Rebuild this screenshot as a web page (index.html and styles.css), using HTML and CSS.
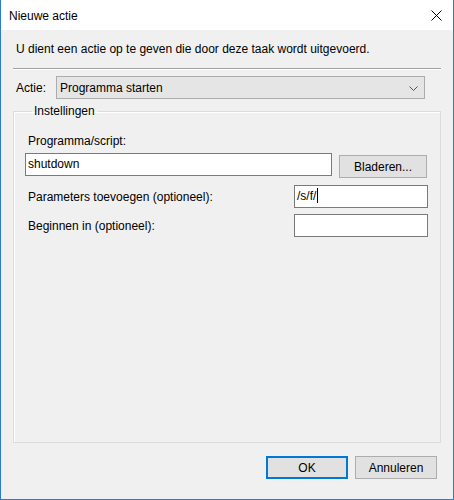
FILE: index.html
```html
<!DOCTYPE html>
<html lang="nl">
<head>
    <meta charset="UTF-8">
    <title>Nieuwe actie</title>
    <link rel="stylesheet" href="styles.css">
</head>
<body>
    <div class="window">
        <div class="titlebar">
            <span class="title">Nieuwe actie</span>
            <svg class="close" width="11" height="11" viewBox="0 0 11 11">
                <path d="M0.5 0.5 L10.5 10.5 M10.5 0.5 L0.5 10.5" stroke="#000" stroke-width="1" fill="none"/>
            </svg>
        </div>
        <div class="content">
            <p class="intro">U dient een actie op te geven die door deze taak wordt uitgevoerd.</p>
            <div class="separator"></div>
            <div class="action-row">
                <span class="action-label">Actie:</span>
                <div class="combo">
                    <span>Programma starten</span>
                    <svg class="chevron" width="9" height="5" viewBox="0 0 9 5">
                        <path d="M0.5 0.5 L4.5 4.5 L8.5 0.5" stroke="#555" stroke-width="1" fill="none"/>
                    </svg>
                </div>
            </div>
            <fieldset class="group">
                <legend>Instellingen</legend>
                <div class="label">Programma/script:</div>
                <div class="program-row">
                    <div class="field wide">shutdown</div>
                    <button class="btn browse" type="button">Bladeren...</button>
                </div>
                <div class="param-row">
                    <span class="label">Parameters toevoegen (optioneel):</span>
                    <div class="field small">/s/f/<span class="caret"></span></div>
                </div>
                <div class="param-row second">
                    <span class="label">Beginnen in (optioneel):</span>
                    <div class="field small"></div>
                </div>
            </fieldset>
            <div class="footer">
                <button class="btn default" type="button">OK</button>
                <button class="btn" type="button">Annuleren</button>
            </div>
        </div>
    </div>
</body>
</html>
```

FILE: styles.css
```css
* {
    margin: 0;
    padding: 0;
    box-sizing: border-box;
}
body {
    font-family: 'Liberation Sans', Arial, sans-serif;
    font-size: 12px;
    line-height: 16px;
    color: #000;
    background: #f0f0f0;
}
.window {
    width: 454px;
    height: 500px;
    border: 1px solid #2b7bd1;
    border-top: none;
    display: flex;
    flex-direction: column;
    background: #f0f0f0;
}
.titlebar {
    height: 30px;
    background: #fff;
    display: flex;
    align-items: center;
    justify-content: space-between;
    padding: 0 11px 0 8px;
}
.title {
    padding-top: 1px;
}
.close {
    margin-top: 1px;
}
.content {
    flex: 1;
    display: flex;
    flex-direction: column;
    padding: 11px 12px 0 12px;
}
.intro {
    padding-left: 3px;
}
.separator {
    margin-top: 11px;
    height: 2px;
    border-top: 1px solid #a0a0a0;
    border-bottom: 1px solid #fff;
}
.action-row {
    margin-top: 6px;
    display: flex;
    align-items: center;
    padding-left: 3px;
    padding-right: 16px;
}
.action-label {
    width: 40px;
}
.combo {
    flex: 1;
    height: 23px;
    background: #e5e5e5;
    border: 1px solid #acacac;
    display: flex;
    align-items: center;
    justify-content: space-between;
    padding: 0 6px 0 3px;
}
.chevron {
    margin-top: 1px;
}
.group {
    margin-top: 4px;
    flex: 1;
    border: 1px solid #dcdcdc;
    box-shadow: inset 1px 1px 0 #fff;
    padding: 14px 12px 0 11px;
    min-width: 0;
}
.group legend {
    margin-left: 7px;
    padding: 0 3px 0 2px;
}
.label {
    padding-left: 3px;
}
.program-row {
    margin-top: 4px;
    display: flex;
    align-items: flex-start;
    gap: 7px;
}
.field {
    height: 23px;
    background: #fff;
    border: 1px solid #7a7a7a;
    padding: 2px 2px 0 2px;
    white-space: nowrap;
}
.field.wide {
    width: 307px;
}
.field.small {
    width: 134px;
}
.caret {
    display: inline-block;
    width: 1px;
    height: 15px;
    background: #000;
    vertical-align: -3px;
    margin-left: 1px;
}
.btn {
    font-family: inherit;
    font-size: 12px;
    line-height: 16px;
    color: #000;
    height: 23px;
    background: #e1e1e1;
    border: 1px solid #adadad;
}
.browse {
    width: 88px;
    margin-top: 2px;
}
.param-row {
    margin-top: 7px;
    display: flex;
    align-items: center;
    justify-content: space-between;
}
.param-row.second {
    margin-top: 6px;
}
.footer {
    display: flex;
    justify-content: flex-end;
    gap: 7px;
    padding: 13px 4px 20px 0;
}
.footer .btn {
    width: 82px;
}
.btn.default {
    border: 2px solid #0078d7;
}
```
